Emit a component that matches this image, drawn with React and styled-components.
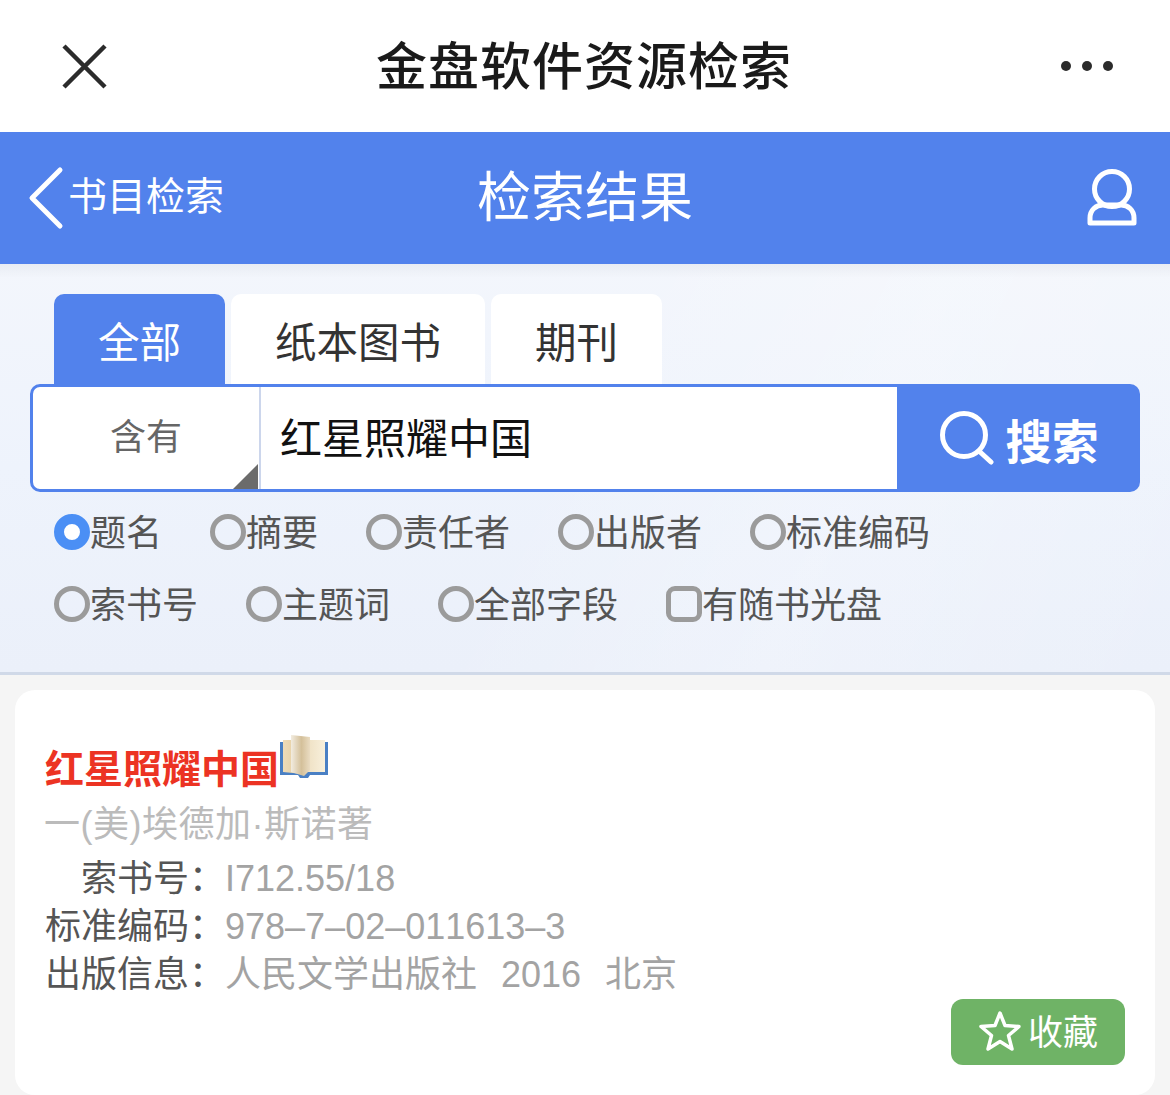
import styled, { createGlobalStyle } from "styled-components";

const blue = "#5282ec";

const Global = createGlobalStyle`
  html, body { margin: 0; padding: 0; background: #f5f5f5; }
  body { font-family: "Liberation Sans", "Noto Sans CJK SC", sans-serif; }
`;

const Page = styled.div`
  width: 1170px;
  height: 1095px;
  overflow: hidden;
  background: #f5f5f5;
`;

const WechatBar = styled.header`
  height: 132px;
  background: #fff;
  display: grid;
  grid-template-columns: 1fr auto 1fr;
  align-items: center;
  padding: 0 62px;
`;

const WechatTitle = styled.h1`
  margin: 0;
  height: 132px;
  font-size: 51px;
  font-weight: 500;
  letter-spacing: 1px;
  color: #1a1a1a;
  line-height: 135px;
  transform: translateX(-1px);
`;

const MoreIcon = styled.svg`
  justify-self: end;
  margin-right: -6px;
`;

const BlueBar = styled.div`
  height: 132px;
  background: ${blue};
  display: grid;
  grid-template-columns: 1fr auto 1fr;
  align-items: center;
  padding: 0 28px;
  color: #fff;
`;

const BackLink = styled.a`
  display: flex;
  align-items: center;
  gap: 4px;
  font-size: 39px;
  line-height: 1;
`;

const BackText = styled.span`
  margin-top: -3px;
`;

const BlueTitle = styled.div`
  font-size: 54px;
  line-height: 132px;
`;

const UserIcon = styled.svg`
  justify-self: end;
  margin-right: 5px;
`;

const SearchPanel = styled.section`
  box-sizing: border-box;
  height: 411px;
  border-bottom: 3px solid #d0d9e8;
  padding-top: 30px;
  background:
    linear-gradient(180deg, rgba(210, 214, 222, 0.3) 0, rgba(210, 214, 222, 0) 14px),
    linear-gradient(115deg, rgba(255, 255, 255, 0) 45%, rgba(255, 255, 255, 0.2) 70%, rgba(255, 255, 255, 0) 100%),
    linear-gradient(180deg, #f3f6fc 0%, #eef3fc 50%, #ebf0fa 100%);
`;

const Tabs = styled.div`
  display: flex;
  gap: 6px;
  padding-left: 54px;
`;

const Tab = styled.div`
  height: 90px;
  padding: 0 44px;
  border-radius: 10px 10px 0 0;
  font-size: 41.5px;
  line-height: 99px;
  background: ${(props) => (props.$active ? blue : "#fff")};
  color: ${(props) => (props.$active ? "#fff" : "#333")};
`;

const SearchRow = styled.div`
  display: flex;
  margin: 0 30px;
  height: 108px;
`;

const SearchField = styled.div`
  flex: 1;
  display: flex;
  background: #fff;
  border: 3px solid ${blue};
  border-radius: 10px 0 0 10px;
`;

const MatchSelect = styled.div`
  position: relative;
  width: 226px;
  border-right: 2px solid #ccd6ec;
  font-size: 36px;
  color: #666;
  text-align: center;
  line-height: 102px;
`;

const SelectCorner = styled.span`
  position: absolute;
  right: 1px;
  bottom: 0;
  width: 25px;
  height: 25px;
  background: #6b6b6b;
  clip-path: polygon(100% 0, 100% 100%, 0 100%);
`;

const QueryText = styled.div`
  flex: 1;
  padding-left: 19px;
  font-size: 42px;
  line-height: 106px;
  color: #111;
`;

const SearchButton = styled.button`
  width: 240px;
  border: 0;
  padding: 0 2px 0 0;
  border-radius: 0 10px 10px 0;
  background: ${blue};
  color: #fff;
  display: flex;
  align-items: center;
  justify-content: center;
  gap: 12px;
  font-family: inherit;
  font-size: 46.5px;
  font-weight: 700;
`;

const RadioRows = styled.div`
  display: flex;
  flex-direction: column;
  gap: 36px;
  padding: 22px 0 0 54px;
`;

const RadioRow = styled.div`
  display: flex;
  gap: 48px;
`;

const Option = styled.label`
  display: flex;
  align-items: center;
  height: 36px;
  font-size: 36px;
  line-height: 36px;
  color: #555;
`;

const OptionText = styled.span`
  padding-top: 4px;
`;

const Mark = styled.span`
  box-sizing: border-box;
  width: 36px;
  height: 36px;
  flex: none;
  border-radius: ${(props) => (props.$square ? "9px" : "50%")};
  border: ${(props) => (props.$checked ? "10px solid #4b8ff5" : "5px solid #9b9b9b")};
  background: ${(props) => (props.$checked ? "#fff" : "transparent")};
`;

const ResultCard = styled.article`
  margin: 15px 15px 0;
  height: 405px;
  box-sizing: border-box;
  padding: 40px 30px 0;
  background: #fff;
  border-radius: 20px;
`;

const TitleRow = styled.div`
  display: flex;
  height: 68px;
`;

const BookTitle = styled.a`
  font-size: 39px;
  font-weight: 700;
  color: #ec3323;
  line-height: 80px;
`;

const BookIcon = styled.svg`
  margin-top: 4px;
`;

const Author = styled.div`
  margin: -2px 0 3px -1px;
  height: 56px;
  font-size: 36px;
  line-height: 58px;
  letter-spacing: 0.5px;
  color: #bbb;
`;

const MetaRow = styled.div`
  display: flex;
  font-size: 36px;
  line-height: 48px;
  color: #a3a3a3;
  font-kerning: none;
`;

const MetaLabel = styled.span`
  width: 180px;
  flex: none;
  color: #555;
  text-align: right;
  white-space: nowrap;
`;

const MetaValue = styled.span`
  white-space: pre;
  word-spacing: 2px;
`;

const CardFooter = styled.div`
  display: flex;
  justify-content: flex-end;
`;

const FavButton = styled.button`
  width: 174px;
  height: 66px;
  border: 0;
  padding: 0 0 6px;
  border-radius: 12px;
  background: #6fb366;
  color: #fff;
  display: flex;
  align-items: center;
  justify-content: center;
  gap: 6px;
  font-family: inherit;
  font-size: 35px;
`;

const FavIcon = styled.svg`
  margin-top: 4px;
`;

function Options({ items }) {
  return (
    <RadioRow>
      {items.map((item) => (
        <Option key={item.label}>
          <Mark $checked={item.checked} $square={item.square} />
          <OptionText>{item.label}</OptionText>
        </Option>
      ))}
    </RadioRow>
  );
}

function Meta({ label, value }) {
  return (
    <MetaRow>
      <MetaLabel>{label}：</MetaLabel>
      <MetaValue>{value}</MetaValue>
    </MetaRow>
  );
}

export default function App() {
  return (
    <Page>
      <Global />
      <WechatBar>
        <svg width="46" height="46" viewBox="0 0 46 46">
          <path d="M2 3 L43 44 M43 3 L2 44" stroke="#2b2b2b" strokeWidth="4.5" fill="none" />
        </svg>
        <WechatTitle>金盘软件资源检索</WechatTitle>
        <MoreIcon width="54" height="12" viewBox="0 0 54 12">
          <circle cx="6" cy="6" r="5" fill="#2b2b2b" />
          <circle cx="27" cy="6" r="5" fill="#2b2b2b" />
          <circle cx="48" cy="6" r="5" fill="#2b2b2b" />
        </MoreIcon>
      </WechatBar>

      <BlueBar>
        <BackLink>
          <svg width="36" height="64" viewBox="0 0 36 64">
            <path d="M32 4 L4 32 L32 60" stroke="#fff" strokeWidth="5" strokeLinecap="round" strokeLinejoin="round" fill="none" />
          </svg>
          <BackText>书目检索</BackText>
        </BackLink>
        <BlueTitle>检索结果</BlueTitle>
        <UserIcon width="50" height="60" viewBox="0 0 50 60">
          <circle cx="25" cy="21" r="17.5" stroke="#fff" strokeWidth="5" fill="none" />
          <path d="M3 55 V50 C3 42 9 37 16 37 H34 C41 37 47 42 47 50 V55 Z" stroke="#fff" strokeWidth="5" strokeLinejoin="round" fill="none" />
        </UserIcon>
      </BlueBar>

      <SearchPanel>
        <Tabs>
          <Tab $active>全部</Tab>
          <Tab>纸本图书</Tab>
          <Tab>期刊</Tab>
        </Tabs>
        <SearchRow>
          <SearchField>
            <MatchSelect>
              含有
              <SelectCorner />
            </MatchSelect>
            <QueryText>红星照耀中国</QueryText>
          </SearchField>
          <SearchButton>
            <svg width="54" height="54" viewBox="0 0 54 54">
              <circle cx="24" cy="24" r="21.5" stroke="#fff" strokeWidth="5" fill="none" />
              <path d="M39 40 L51 51" stroke="#fff" strokeWidth="5" strokeLinecap="round" fill="none" />
            </svg>
            搜索
          </SearchButton>
        </SearchRow>
        <RadioRows>
          <Options
            items={[
              { label: "题名", checked: true },
              { label: "摘要" },
              { label: "责任者" },
              { label: "出版者" },
              { label: "标准编码" },
            ]}
          />
          <Options
            items={[
              { label: "索书号" },
              { label: "主题词" },
              { label: "全部字段" },
              { label: "有随书光盘", square: true },
            ]}
          />
        </RadioRows>
      </SearchPanel>

      <ResultCard>
        <TitleRow>
          <BookTitle>红星照耀中国</BookTitle>
          <BookIcon width="50" height="46" viewBox="0 0 50 46">
            <defs>
              <linearGradient id="leftPage" x1="0" x2="1" y1="0" y2="0">
                <stop offset="0" stopColor="#efdcb8" />
                <stop offset="1" stopColor="#e0c899" />
              </linearGradient>
              <linearGradient id="midPage" x1="0" x2="1" y1="0" y2="0">
                <stop offset="0" stopColor="#f2ece0" />
                <stop offset="0.55" stopColor="#d4c09a" />
                <stop offset="1" stopColor="#eadcc2" />
              </linearGradient>
              <linearGradient id="rightPage" x1="0" x2="1" y1="0" y2="0">
                <stop offset="0" stopColor="#e2cca2" />
                <stop offset="1" stopColor="#f8f0dc" />
              </linearGradient>
            </defs>
            <path d="M1 8 H49 V41 H31 L29 44 H21 L19 41 H1 Z" fill="#4a80c4" />
            <path d="M4 6 H46 V38 H4 Z" fill="url(#rightPage)" />
            <path d="M4 6 H24 V40 L4 38 Z" fill="url(#leftPage)" />
            <path d="M12 1 L31 3 V36 L25 42 L12 38 Z" fill="url(#midPage)" />
          </BookIcon>
        </TitleRow>
        <Author>一(美)埃德加·斯诺著</Author>
        <Meta label="索书号" value="I712.55/18" />
        <Meta label="标准编码" value="978–7–02–011613–3" />
        <Meta label="出版信息" value="人民文学出版社  2016  北京" />
        <CardFooter>
          <FavButton>
            <FavIcon width="44" height="44" viewBox="0 0 44 44">
              <path d="M22 4 L27 16.5 L41 17.5 L30.5 26.5 L34 40 L22 32.5 L10 40 L13.5 26.5 L3 17.5 L17 16.5 Z" stroke="#fff" strokeWidth="3.5" strokeLinejoin="round" fill="none" />
            </FavIcon>
            收藏
          </FavButton>
        </CardFooter>
      </ResultCard>
    </Page>
  );
}
